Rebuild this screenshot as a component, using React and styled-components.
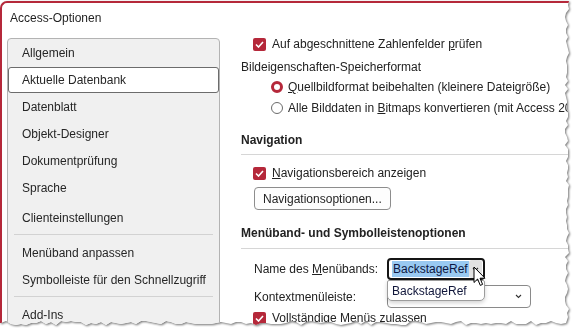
import React from 'react';
import styled, { createGlobalStyle } from 'styled-components';

const RED = '#b5283a';

const GlobalStyle = createGlobalStyle`
  html, body {
    margin: 0;
    padding: 0;
    background: #fff;
    overflow: hidden;
  }
  body {
    font-family: "Liberation Sans", Arial, sans-serif;
    font-size: 12px;
    color: #222;
  }
`;

// torn paper edge on the right and bottom side
const tornEdge = (() => {
  let s = 11;
  const rnd = () => {
    s = (s * 9301 + 49297) % 233280;
    return s / 233280;
  };
  const pts = ['0px 0px', '569px 0px'];
  for (let y = 4; y <= 318; y += 4) pts.push(`${565 + Math.round(rnd() * 4)}px ${y}px`);
  pts.push('566px 322px');
  for (let x = 561; x >= 0; x -= 5) pts.push(`${x}px ${320 + Math.round(rnd() * 4)}px`);
  pts.push('0px 322px');
  return `polygon(${pts.join(', ')})`;
})();

const Paper = styled.div`
  padding-top: 1px;
  width: 576px;
  height: 331px;
  filter: drop-shadow(1px 1px 1px rgba(0, 0, 0, 0.55));
`;

const Window = styled.div`
  box-sizing: border-box;
  width: 574px;
  height: 330px;
  background: #fff;
  border-top: 2px solid ${RED};
  border-left: 2px solid ${RED};
  border-top-left-radius: 7px;
  clip-path: ${tornEdge};
  display: flex;
  flex-direction: column;
  overflow: hidden;
`;

const TitleBar = styled.div`
  height: 29px;
  padding-left: 8px;
  display: flex;
  align-items: center;
  color: #1f1f1f;
`;

const Body = styled.div`
  flex: 1;
  display: flex;
  min-height: 0;
`;

const Sidebar = styled.div`
  box-sizing: border-box;
  width: 213px;
  margin: 6px 0 0 5px;
  align-self: flex-start;
  background: #f0f0f0;
  border: 1px solid #b3b3b3;
  border-radius: 4px;
  display: flex;
  flex-direction: column;
`;

const NavItem = styled.div`
  box-sizing: border-box;
  height: ${p => (p.$active ? 26 : 27)}px;
  margin-top: ${p => p.$gap || (p.$active ? 1 : 0)}px;
  padding-left: 13px;
  display: flex;
  align-items: center;
  color: #262626;
  white-space: nowrap;
  border: 1px solid ${p => (p.$active ? '#6c6c6c' : 'transparent')};
  border-radius: 3px;
  background: ${p => (p.$active ? '#fff' : 'transparent')};
`;

const NavSep = styled.div`
  height: 1px;
  margin: 3px 6px 4px;
  background: #d2d2d2;
`;

const Content = styled.div`
  flex: 1;
  min-width: 0;
  margin-left: 21px;
  display: flex;
  flex-direction: column;
  overflow: hidden;
`;

const Row = styled.div`
  height: ${p => p.$h}px;
  margin-top: ${p => p.$mt || 0}px;
  padding-left: ${p => p.$indent || 0}px;
  display: flex;
  align-items: center;
  white-space: nowrap;
  flex-shrink: 0;
`;

const Heading = styled.div`
  padding-top: ${p => p.$pt}px;
  height: 24px;
  line-height: 24px;
  font-weight: bold;
  color: #222;
  border-bottom: 1px solid #d6d6d6;
  padding-bottom: ${p => p.$pb}px;
  flex-shrink: 0;
`;

const Box = styled.span`
  box-sizing: border-box;
  width: 13px;
  height: 13px;
  margin-right: 6px;
  background: ${RED};
  border-radius: 2px;
  display: inline-flex;
  align-items: center;
  justify-content: center;
  flex-shrink: 0;
`;

const RadioDot = styled.span`
  box-sizing: border-box;
  width: 12px;
  height: 12px;
  margin-right: 5px;
  border-radius: 50%;
  border: ${p => (p.$on ? `3.5px solid ${RED}` : '1px solid #6b6b6b')};
  background: #fff;
  flex-shrink: 0;
`;

const Button = styled.button`
  box-sizing: border-box;
  height: 23px;
  padding: 0 8px;
  margin-left: 13px;
  font: inherit;
  color: #1f1f1f;
  background: #fdfdfd;
  border: 1px solid #8d8d8d;
  border-radius: 4px;
`;

const FieldLabel = styled.span`
  width: 133px;
  margin-left: 13px;
  flex-shrink: 0;
`;

const Combo = styled.div`
  position: relative;
  box-sizing: border-box;
  width: ${p => p.$w}px;
  height: ${p => p.$hgt}px;
  border: ${p => (p.$focus ? '2px solid #151515' : '1px solid #8a8a8a')};
  border-radius: 4px;
  background: #fff;
  display: flex;
  align-items: center;
  padding-left: ${p => (p.$focus ? 3 : 4)}px;
`;

const Selected = styled.span`
  background: #99c9f1;
  color: #0d1640;
  padding: 0 1px;
  line-height: 16px;
`;

const DropBtn = styled.span`
  margin-left: auto;
  margin-right: 1px;
  width: 15px;
  height: 18px;
  border-radius: 3px;
  background: #e2e2e2;
  display: flex;
  align-items: center;
  justify-content: center;
`;

const Chevron = styled.svg`
  margin-left: ${p => (p.$auto ? 'auto' : 0)};
  margin-right: ${p => (p.$auto ? '8px' : 0)};
`;

const ListPopup = styled.div`
  position: absolute;
  left: -2px;
  top: calc(100% + 2px);
  box-sizing: border-box;
  width: 98px;
  height: 21px;
  padding-left: 4px;
  display: flex;
  align-items: center;
  background: #fff;
  color: #10163a;
  border: 1px solid #9c9c9c;
  border-radius: 2px 2px 5px 5px;
  box-shadow: 0 2px 4px rgba(0, 0, 0, 0.18);
  z-index: 2;
`;

const Cursor = styled.svg`
  position: absolute;
  left: 84px;
  top: 6px;
  z-index: 3;
`;

const Check = () => (
  <Box>
    <svg width="9" height="7" viewBox="0 0 9 7">
      <path d="M1 3.5 L3.5 6 L8 1" fill="none" stroke="#fff" strokeWidth="1.6" />
    </svg>
  </Box>
);

const Down = ({ auto }) => (
  <Chevron $auto={auto} width="7" height="5" viewBox="0 0 7 5">
    <path d="M1 1 L3.5 3.5 L6 1" fill="none" stroke="#333" strokeWidth="1.1" />
  </Chevron>
);

const navTop = ['Allgemein', 'Aktuelle Datenbank', 'Datenblatt', 'Objekt-Designer', 'Dokumentprüfung', 'Sprache'];

export default function App() {
  return (
    <>
      <GlobalStyle />
      <Paper>
        <Window>
          <TitleBar>Access-Optionen</TitleBar>
          <Body>
            <Sidebar>
              {navTop.map(n => (
                <NavItem key={n} $active={n === 'Aktuelle Datenbank'}>{n}</NavItem>
              ))}
              <NavItem $gap={3}>Clienteinstellungen</NavItem>
              <NavSep />
              <NavItem>Menüband anpassen</NavItem>
              <NavItem>Symbolleiste für den Schnellzugriff</NavItem>
              <NavSep />
              <NavItem>Add-Ins</NavItem>
            </Sidebar>

            <Content>
              <Row $h={24} $indent={12}>
                <Check />
                Auf abgeschnittene Zahlenfelder&nbsp;<u>p</u>rüfen
              </Row>
              <Row $h={22}>Bildeigenschaften-Speicherformat</Row>
              <Row $h={18} $indent={30}>
                <RadioDot $on />
                <u>Q</u>uellbildformat beibehalten (kleinere Dateigröße)
              </Row>
              <Row $h={24} $indent={30}>
                <RadioDot />
                Alle Bilddaten in&nbsp;<u>B</u>itmaps konvertieren (mit Access 2003 und Access 2007 kompatibel)
              </Row>

              <Heading $pt={8} $pb={2}>Navigation</Heading>
              <Row $h={24} $mt={6} $indent={12}>
                <Check />
                <u>N</u>avigationsbereich anzeigen
              </Row>
              <Row $h={23} $mt={2}>
                <Button>Navigationsoptionen...</Button>
              </Row>

              <Heading $pt={11} $pb={3}>Menüband- und Symbolleistenoptionen</Heading>
              <Row $h={22} $mt={9}>
                <FieldLabel>Name des&nbsp;<u>M</u>enübands:</FieldLabel>
                <Combo $w={98} $hgt={22} $focus>
                  <Selected>BackstageRef</Selected>
                  <DropBtn>
                    <Down />
                  </DropBtn>
                  <ListPopup>BackstageRef</ListPopup>
                  <Cursor width="13" height="21" viewBox="0 0 13 21">
                    <path
                      d="M1 1 L1 16.5 L4.6 13 L7.3 19.4 L9.6 18.4 L7 12.2 L12 12.2 Z"
                      fill="#fff"
                      stroke="#000"
                      strokeWidth="1"
                      strokeLinejoin="round"
                    />
                  </Cursor>
                </Combo>
              </Row>
              <Row $h={23} $mt={5}>
                <FieldLabel>Kontextmenüleiste:</FieldLabel>
                <Combo $w={144} $hgt={23}>
                  <Down auto />
                </Combo>
              </Row>
              <Row $h={20} $indent={12}>
                <Check />
                Vollständige Menüs zulassen
              </Row>
            </Content>
          </Body>
        </Window>
      </Paper>
    </>
  );
}
